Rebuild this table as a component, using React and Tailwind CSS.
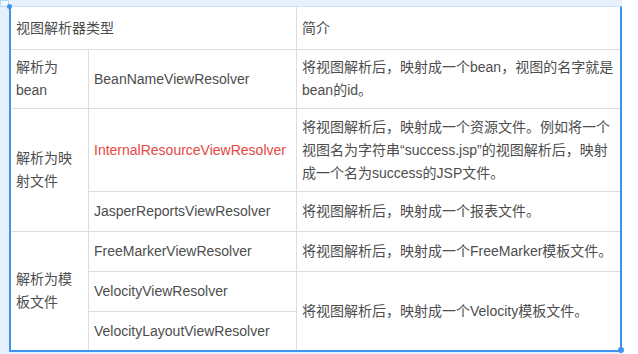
export default function App() {
  const font = { fontFamily: '"Liberation Sans", Arial, "Noto Sans CJK SC", sans-serif' };
  const cell = "flex items-center pl-[5px] pr-[3px] border-[#dddddd] leading-[23px]";
  return (
    <div className="w-[638px] h-[354px] bg-white overflow-hidden text-[14px] text-[#4d4d4d]" style={font}>
      <div className="relative w-[622px] h-[354px] bg-[#e6f1fd] pl-[9px] pt-[6px]">
        <div className="absolute left-0 top-0 w-[9px] h-[7px] border border-[#b9d7f7] bg-[#f2f8fe]" />
        <div className="grid grid-cols-[78px_208px_323px] grid-rows-[43px_59px_83px_40px_40px_40px_38px] bg-white border-l-2 border-r-2 border-b-2 border-[#3d94f2] border-t border-t-[#cfe2f8] w-[613px]">
          <div className={`${cell} col-span-2 border-r border-b`}>视图解析器类型</div>
          <div className={`${cell} border-b`}>简介</div>

          <div className={`${cell} border-r border-b`}>解析为bean</div>
          <div className={`${cell} border-r border-b`}>BeanNameViewResolver</div>
          <div className={`${cell} border-b whitespace-nowrap`}>
            <span>将视图解析后，映射成一个bean，视图的名字就是<br />bean的id。</span>
          </div>

          <div className={`${cell} row-span-2 border-r border-b`}>解析为映射文件</div>
          <div className={`${cell} border-r border-b text-[#e5483f]`}>InternalResourceViewResolver</div>
          <div className={`${cell} border-b whitespace-nowrap`}>
            <span>将视图解析后，映射成一个资源文件。例如将一个<br />视图名为字符串“success.jsp”的视图解析后，映射<br />成一个名为success的JSP文件。</span>
          </div>

          <div className={`${cell} border-r border-b`}>JasperReportsViewResolver</div>
          <div className={`${cell} border-b`}>将视图解析后，映射成一个报表文件。</div>

          <div className={`${cell} row-span-3 border-r`}>解析为模板文件</div>
          <div className={`${cell} border-r border-b`}>FreeMarkerViewResolver</div>
          <div className={`${cell} border-b`}>将视图解析后，映射成一个FreeMarker模板文件。</div>

          <div className={`${cell} border-r border-b`}>VelocityViewResolver</div>
          <div className={`${cell} row-span-2`}>将视图解析后，映射成一个Velocity模板文件。</div>

          <div className={`${cell} border-r`}>VelocityLayoutViewResolver</div>
        </div>
        <div className="absolute left-[7px] top-[4px] w-[5px] h-[5px] rounded-full bg-[#3d94f2]" />
        <div className="absolute left-[618px] top-[347px] w-[6px] h-[6px] rounded-full bg-[#3d94f2]" />
      </div>
    </div>
  );
}
